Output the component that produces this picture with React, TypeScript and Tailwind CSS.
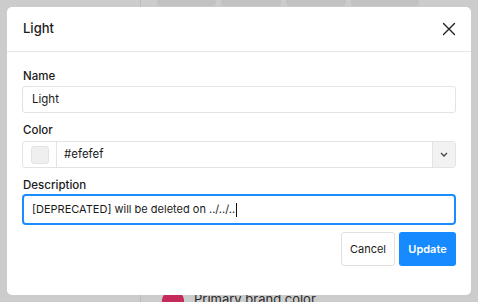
import React from "react";

export default function App() {
  return (
    <div
      className="relative w-[478px] h-[302px] overflow-hidden bg-[#cccccc]"
      style={{ fontFamily: "Inter, 'Noto Sans', sans-serif" }}
    >
      {/* background app (dimmed) */}
      <div className="absolute left-[140px] top-0 h-full w-px bg-[#bcbcbc]" />
      <div className="absolute left-[157px] top-0 flex gap-[5px]">
        <div className="h-[6px] w-[59px] rounded-b-[4px] bg-[#c2c2c2]" />
        <div className="h-[6px] w-[60px] rounded-b-[4px] bg-[#c2c2c2]" />
        <div className="h-[6px] w-[60px] rounded-b-[4px] bg-[#c2c2c2]" />
        <div className="h-[6px] w-[68px] rounded-b-[4px] bg-[#c2c2c2]" />
      </div>
      <div className="absolute left-[162px] top-[290px] flex items-start gap-[10px]">
        <div className="h-[22px] w-[22px] rounded-full bg-[#c42b5b]" />
        <div className="text-[13px] leading-[16px] text-[#2b2b2b] mt-[1px]">Primary brand color</div>
      </div>

      {/* modal */}
      <div className="absolute left-[7px] top-[7px] w-[464px] h-[288px] rounded-[5px] bg-white flex flex-col">
        <div className="h-[45px] flex items-center justify-between pl-[16px] pr-[15px] border-b border-[#e6e6e6]">
          <span className="text-[13px] font-medium text-[#1a1a1a]">Light</span>
          <svg width="14" height="14" viewBox="0 0 14 14" fill="none" stroke="#222" strokeWidth="1.4" strokeLinecap="round">
            <path d="M1.5 1.5 L12.5 12.5 M12.5 1.5 L1.5 12.5" />
          </svg>
        </div>
        <div className="px-[15px] pt-[16px] flex flex-col">
          <label className="text-[11.5px] leading-[16px] font-medium text-[#1a1a1a] mb-[2px] pl-[1px]">Name</label>
          <div className="h-[27px] border border-[#e3e3e3] rounded-[3px] flex items-center px-[9px] text-[11.5px] text-[#1a1a1a]">
            Light
          </div>
          <label className="text-[11.5px] leading-[16px] font-medium text-[#1a1a1a] mt-[9px] mb-[3px] pl-[1px]">Color</label>
          <div className="h-[27px] border border-[#e3e3e3] rounded-[3px] flex items-stretch text-[11.5px] text-[#1a1a1a]">
            <div className="w-[34px] border-r border-[#e3e3e3] flex items-center justify-center">
              <div className="w-[18px] h-[18px] rounded-[3px] bg-[#efefef] border border-[#e2e2e2]" />
            </div>
            <div className="flex-1 flex items-center px-[7px]">#efefef</div>
            <div className="w-[23px] border-l border-[#e3e3e3] bg-[#f2f2f2] flex items-center justify-center">
              <svg width="8" height="5" viewBox="0 0 8 5" fill="none" stroke="#444" strokeWidth="1.3">
                <path d="M1 1 L4 4 L7 1" />
              </svg>
            </div>
          </div>
          <label className="text-[11.5px] leading-[16px] font-medium text-[#1a1a1a] mt-[9px] mb-[1px] pl-[1px]">Description</label>
          <div className="h-[31px] border-2 border-[#1a8cff] rounded-[4px] flex items-center px-[8px] text-[11px] text-[#1a1a1a]">
            [DEPRECATED] will be deleted on ../../..
            <span className="inline-block w-px h-[14px] bg-[#111] ml-[1px]" />
          </div>
          <div className="flex justify-end gap-[4px] mt-[7px]">
            <button className="h-[34px] w-[54px] border border-[#e0e0e0] rounded-[3px] bg-white text-[11px] font-normal text-[#1a1a1a]">
              Cancel
            </button>
            <button className="h-[34px] w-[57px] rounded-[3px] bg-[#168aff] text-[11px] font-semibold text-white">
              Update
            </button>
          </div>
        </div>
      </div>
    </div>
  );
}
